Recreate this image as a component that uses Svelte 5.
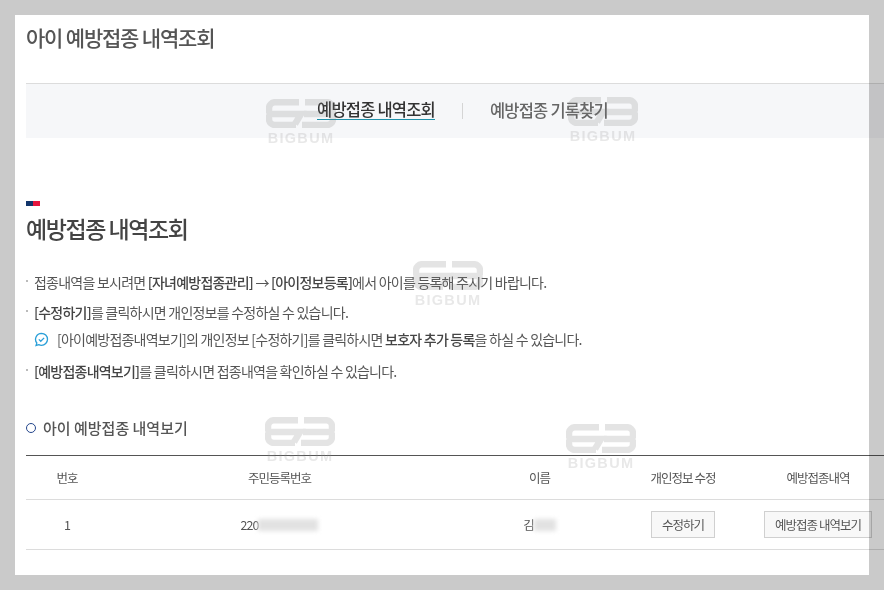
<script>
  const rows = [
    { id: 1 },
  ];
  const marks = [
    [266, 99],
    [568, 97],
    [413, 261],
    [265, 417],
    [566, 424],
  ];
</script>

<div class="frame">
  <div class="page">
    <h1>아이 예방접종 내역조회</h1>

    <div class="tabs">
      <a class="tab on" href="#a">예방접종 내역조회</a>
      <span class="sep"></span>
      <a class="tab" href="#b">예방접종 기록찾기</a>
    </div>

    <div class="flag"><i></i><i></i></div>
    <h2>예방접종 내역조회</h2>

    <ul class="notes">
      <li>접종내역을 보시려면 <b>[자녀예방접종관리]</b> → <b>[아이정보등록]</b>에서 아이를 등록해 주시기 바랍니다.</li>
      <li class="tight"><b>[수정하기]</b>를 클릭하시면 개인정보를 수정하실 수 있습니다.</li>
      <li class="sub">
        <svg viewBox="0 0 16 16" width="15" height="15" fill="none" stroke="#2a9fd8" stroke-width="1.4">
          <path d="M8 1.4a6.4 6.4 0 0 1 0 12.8c-1 0-2-.2-2.9-.7l-2.9.9.8-2.7A6.4 6.4 0 0 1 8 1.4z" />
          <path d="M5.2 7.9l2 2 3.6-3.6" />
        </svg>
        <span>[아이예방접종내역보기]의 개인정보 [수정하기]를 클릭하시면 <b>보호자 추가 등록</b>을 하실 수 있습니다.</span>
      </li>
      <li><b>[예방접종내역보기]</b>를 클릭하시면 접종내역을 확인하실 수 있습니다.</li>
    </ul>

    <h3><span class="ring"></span>아이 예방접종 내역보기</h3>

    <table>
      <thead>
        <tr>
          <th class="c1">번호</th>
          <th class="c2">주민등록번호</th>
          <th class="c3">이름</th>
          <th class="c4">개인정보 수정</th>
          <th class="c5">예방접종내역</th>
        </tr>
      </thead>
      <tbody>
        {#each rows as row}
          <tr>
            <td>{row.id}</td>
            <td><span class="masked">220<em class="blur w1"></em></span></td>
            <td><span class="masked">김<em class="blur w2"></em></span></td>
            <td><button>수정하기</button></td>
            <td><button>예방접종 내역보기</button></td>
          </tr>
        {/each}
      </tbody>
    </table>
  </div>

  {#each marks as [x, y]}
    <div class="mark" style="left:{x}px;top:{y}px">
      <svg viewBox="0 0 70 29" width="70" height="29" fill="none" stroke="#7d7d7d" stroke-width="6.5">
        <path d="M33 3.2H9a6 6 0 0 0-6 6v2.800a3 3 0 0 0 3 3 3 3 0 0 0-3 3v2a6 6 0 0 0 6 6h21" />
        <path d="M6 15H35L29 25" />
        <path d="M39 3.200H61a6 6 0 0 1 6 6v2.800a3 3 0 0 1-3 3 3 3 0 0 1 3 3v2a6 6 0 0 1-6 6H36" />
        <path d="M64 15H38" />
      </svg>
      <span>BIGBUM</span>
    </div>
  {/each}
</div>

<style>
  :global(body) {
    margin: 0;
    background: #cacaca;
  }

  .frame {
    position: relative;
    width: 884px;
    height: 590px;
    overflow: hidden;
    font-family: "Noto Sans CJK KR", "Noto Sans", sans-serif;
    letter-spacing: -0.06em;
    color: #4a4a4a;
  }

  .page {
    position: absolute;
    left: 15px;
    top: 15px;
    width: 854px;
    height: 560px;
    background: #fff;
    padding-left: 11px;
    box-sizing: border-box;
  }

  h1 {
    margin: 0;
    padding-top: 7px;
    height: 61px;
    box-sizing: border-box;
    font-size: 21px;
    line-height: 30px;
    font-weight: 500;
    letter-spacing: -1.2px;
    color: #555;
  }

  .tabs {
    width: 858px;
    height: 55px;
    box-sizing: border-box;
    margin-top: 7px;
    padding-left: 291px;
    border-top: 1px solid #dcdcdc;
    background: #f6f7f9;
    mix-blend-mode: multiply;
    display: flex;
    align-items: center;
  }

  .tab {
    font-size: 16.5px;
    font-weight: 500;
    line-height: 24px;
    letter-spacing: -0.8px;
    color: #666;
    text-decoration: none;
    margin-top: -2px;
  }

  .tab.on {
    color: #333;
    border-bottom: 1px solid #1f8fa8;
    line-height: 20px;
    margin-top: -3px;
  }

  .sep {
    width: 1px;
    height: 16px;
    background: #d5d5d5;
    margin: 0 27px;
  }

  .flag {
    display: flex;
    margin-top: 63px;
  }

  .flag i {
    width: 7px;
    height: 5px;
    background: #12356b;
  }

  .flag i + i {
    background: #e5163f;
  }

  h2 {
    margin: 0;
    padding-top: 6px;
    font-size: 23px;
    line-height: 32px;
    font-weight: 500;
    letter-spacing: -1.45px;
    color: #444;
  }

  .notes {
    list-style: none;
    margin: 28px 0 0;
    padding: 0 0 0 8px;
    font-size: 14px;
    line-height: 20px;
    letter-spacing: -0.77px;
    color: #555;
  }

  .notes li {
    position: relative;
    margin-bottom: 10px;
  }

  .notes li.tight {
    margin-bottom: 7px;
  }

  .notes li.sub {
    margin-bottom: 12px;
  }

  .notes li:not(.sub)::before {
    content: "";
    position: absolute;
    left: -8px;
    top: 8px;
    width: 2px;
    height: 2px;
    background: #bbb;
  }

  .notes b {
    font-weight: 500;
    color: #444;
  }

  .sub {
    display: flex;
    align-items: center;
    gap: 8px;
  }

  h3 {
    display: flex;
    align-items: center;
    margin: 36px 0 0;
    font-size: 15px;
    line-height: 22px;
    font-weight: 500;
    color: #555;
    letter-spacing: 0;
  }

  .ring {
    width: 8px;
    height: 8px;
    border: 1.5px solid #24468c;
    border-radius: 50%;
    margin-right: 7px;
  }

  table {
    width: 872px;
    margin-top: 16px;
    border-collapse: collapse;
    table-layout: fixed;
    font-size: 12.5px;
    color: #555;
    mix-blend-mode: multiply;
  }

  thead tr {
    height: 44px;
    border-top: 1px solid #555;
    border-bottom: 1px solid #dcdcdc;
  }

  tbody tr {
    height: 50px;
    border-bottom: 1px solid #dcdcdc;
  }

  th {
    font-weight: 400;
  }

  th, td {
    padding: 0;
    text-align: center;
  }

  .c1 { width: 82px; }
  .c2 { width: 343px; }
  .c3 { width: 177px; }
  .c4 { width: 110px; }
  .c5 { width: 160px; }

  .masked {
    display: inline-flex;
    align-items: center;
  }

  .blur {
    display: inline-block;
    height: 12px;
    background: #e2e2e2;
    filter: blur(2px);
  }

  .w1 { width: 60px; }
  .w2 { width: 22px; }

  button {
    height: 27px;
    padding: 0 9.5px;
    font: inherit;
    letter-spacing: inherit;
    color: #555;
    background: #f8f8f8;
    border: 1px solid #d0d0d0;
  }

  .mark {
    position: absolute;
    width: 70px;
    opacity: 0.2;
    text-align: center;
    pointer-events: none;
  }

  .mark svg {
    display: block;
  }

  .mark span {
    display: block;
    margin-top: 3px;
    font-family: "Liberation Sans", sans-serif;
    font-size: 14.5px;
    line-height: 14px;
    font-weight: 700;
    letter-spacing: 0.09em;
    color: #8f8f8f;
  }
</style>
